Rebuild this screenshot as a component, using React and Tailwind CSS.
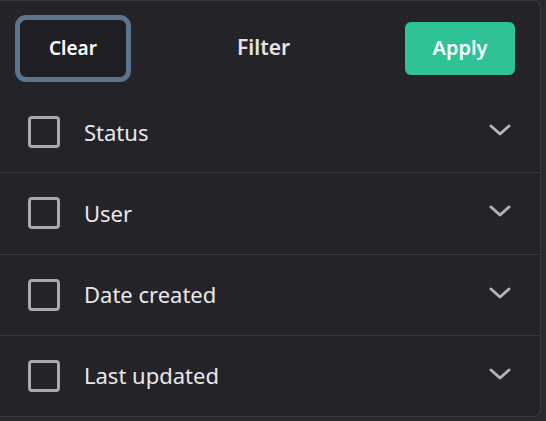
import React from 'react'

const rows = ['Status', 'User', 'Date created', 'Last updated']

function Chevron(){
  return (
    <svg width="22" height="22" viewBox="0 0 22 22" fill="none" stroke="#b4b4b7" strokeWidth="3" strokeLinecap="round" strokeLinejoin="round">
      <path d="M2 5l9 8 9-8" />
    </svg>
  )
}

export default function App(){
  return (
    <div className="w-[546px] h-[421px] bg-[#2a2a2e] overflow-hidden" style={{fontFamily: '"Noto Sans", "Open Sans", sans-serif'}}>
      <div className="w-[541px] h-[417px] bg-[#242428] border-t border-r border-b border-[#3b3b3f] rounded-tr-lg rounded-br-lg flex flex-col">
        <div className="h-[91px] flex items-center pl-[15px] pr-[25px] pt-[3px] shrink-0">
          <button className="w-[116px] h-[67px] rounded-[11px] border-[5px] border-[#5b7591] bg-[#1f1f23] text-white text-[19px] font-semibold">
            Clear
          </button>
          <div className="text-[#e4e4e6] text-[21px] font-semibold ml-[106px]">Filter</div>
          <button className="ml-auto w-[110px] h-[53px] rounded-md bg-[#2ec295] text-white text-[20px] font-semibold">
            Apply
          </button>
        </div>
        {rows.map((r, i) => (
          <div key={r} className={`flex-1 flex items-center pl-[28px] pr-[29px] ${i < rows.length - 1 ? 'border-b border-[#3b3b3f]' : ''}`}>
            <div className="w-[32px] h-[32px] border-[3px] border-[#a9a9ac] rounded-[4px] shrink-0" />
            <div className="ml-[24px] text-[22px] text-[#e8e8ea] flex-1">{r}</div>
            <Chevron />
          </div>
        ))}
      </div>
    </div>
  )
}
